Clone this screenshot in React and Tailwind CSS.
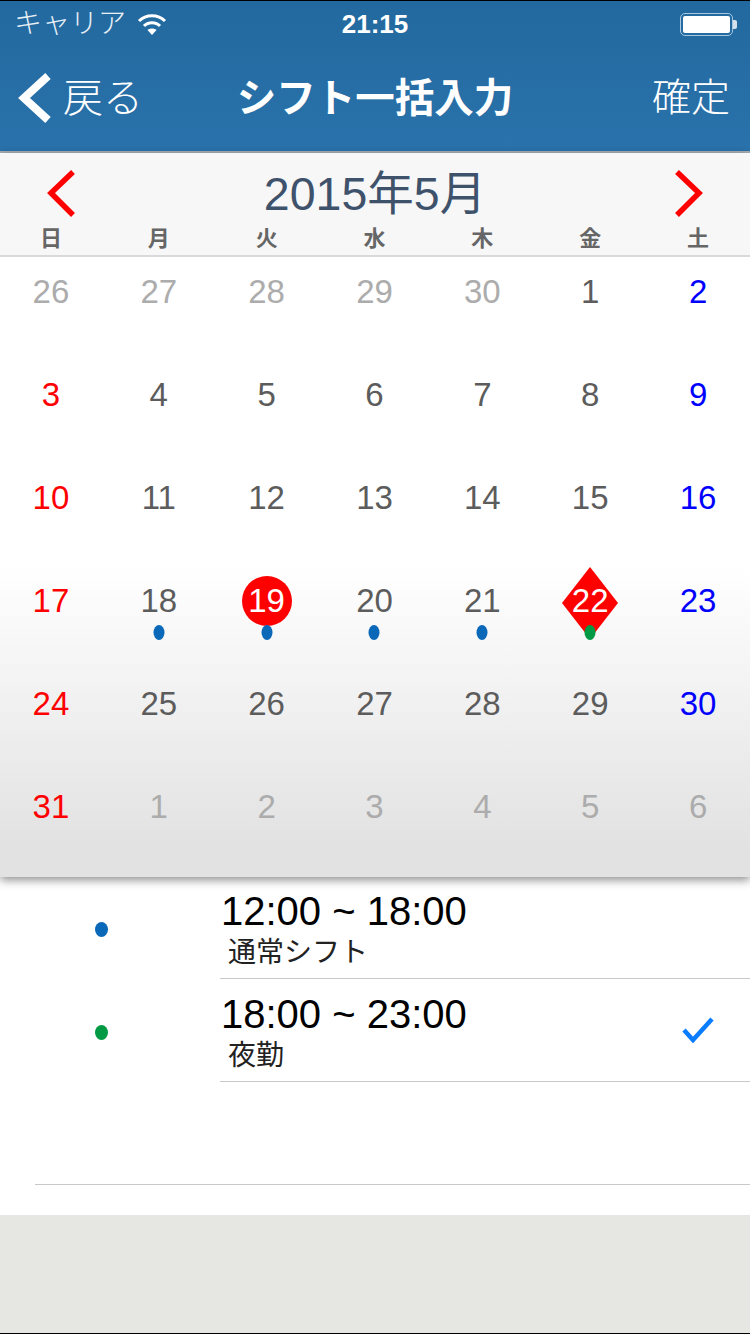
import React from 'react';

const sans = "font-['Liberation_Sans','Noto_Sans_CJK_JP',sans-serif]";

const weekdays = ['日', '月', '火', '水', '木', '金', '土'];

const weeks = [
  [26, 27, 28, 29, 30, 1, 2],
  [3, 4, 5, 6, 7, 8, 9],
  [10, 11, 12, 13, 14, 15, 16],
  [17, 18, 19, 20, 21, 22, 23],
  [24, 25, 26, 27, 28, 29, 30],
  [31, 1, 2, 3, 4, 5, 6],
];

const dayColor = (w, d) => {
  const outside = (w === 0 && d < 5) || (w === 5 && d > 0);
  if (outside) return 'text-[#acacac]';
  if (d === 0) return 'text-[#ff0000]';
  if (d === 6) return 'text-[#0000ff]';
  return 'text-[#5c5c5c]';
};

const Dot = ({ color = 'bg-[#0a68b8]' }) => (
  <span className={`block w-[11px] h-[15px] rounded-[50%] ${color}`} />
);

const Chevron = ({ points, width, color, w, h }) => (
  <svg width={w} height={h} viewBox={`0 0 ${w} ${h}`} fill="none">
    <polyline points={points} stroke={color} strokeWidth={width} />
  </svg>
);

const DayCell = ({ w, d, day }) => {
  const isCircle = w === 3 && d === 2;
  const isDiamond = w === 3 && d === 5;
  const hasDot = w === 3 && d >= 1 && d <= 5;

  return (
    <div className="relative h-[103px] flex flex-col items-center">
      {isCircle && (
        <span className="absolute left-1/2 top-[10px] -translate-x-1/2 w-[50px] h-[50px] rounded-full bg-[#ff0000]" />
      )}
      {isDiamond && (
        <svg className="absolute left-1/2 top-[1px] -translate-x-1/2" width="56" height="72" viewBox="0 0 56 72">
          <polygon points="28,0 56,36 28,72 0,36" fill="#ff0000" />
        </svg>
      )}
      <span
        className={`relative mt-[16px] text-[33px] leading-[38px] ${
          isCircle || isDiamond ? 'text-white' : dayColor(w, d)
        }`}
      >
        {day}
      </span>
      {hasDot && (
        <span className="absolute left-1/2 top-[59px] -translate-x-1/2">
          <Dot color={isDiamond ? 'bg-[#009a44]' : 'bg-[#0a68b8]'} />
        </span>
      )}
    </div>
  );
};

const ShiftRow = ({ time, label, dot, checked, height, dotTop }) => (
  <div className={`flex ${height}`}>
    <div className={`w-[220px] shrink-0 pl-[95px] ${dotTop}`}>
      <span className={`block w-[13px] h-[15px] rounded-[50%] ${dot}`} />
    </div>
    <div className="flex-1 flex items-center justify-between border-b border-[#c8c8c8] pr-[36px]">
      <div className="pt-[3px]">
        <div className="pl-[1px] text-[40px] leading-[46px] text-black">{time}</div>
        <div className="pl-[8px] mt-[2px] text-[28px] leading-[34px] text-[#222222]">{label}</div>
      </div>
      {checked && (
        <svg width="32" height="26" viewBox="0 0 32 26" fill="none">
          <polyline points="2,13 11,23 30,2" stroke="#0a7cff" strokeWidth="4.5" />
        </svg>
      )}
    </div>
  </div>
);

export default function App() {
  return (
    <div className={`w-[750px] h-[1334px] overflow-hidden bg-white flex flex-col ${sans}`}>
      <header className="h-[153px] shrink-0 border-t border-black border-b-2 border-b-[#a9b0b5] bg-gradient-to-b from-[#22699f] to-[#2a72ab] text-white">
        <div className="h-[46px] pl-[14px] pr-[13px] flex items-center justify-between relative">
          <div className="flex items-center gap-[11px]">
            <span className="text-[28px] leading-[34px] font-light text-[#e8eff5]">キャリア</span>
            <svg width="30" height="24" viewBox="0 0 30 24" fill="none" stroke="#ffffff" strokeWidth="3">
              <path d="M2 9 C9 2 21 2 28 9" />
              <path d="M7 14 C11 9.500 19 9.500 23 14" />
              <path d="M15 23 L10.500 18 C13 16 17 16 19.500 18 Z" fill="#ffffff" stroke="none" />
            </svg>
          </div>
          <span className="absolute left-1/2 -translate-x-1/2 text-[26px] leading-[32px] font-bold">21:15</span>
          <div className="flex items-center">
            <div className="w-[53px] h-[23px] rounded-[5px] border border-[#a9c6de] p-[2px]">
              <div className="w-full h-full rounded-[2px] bg-white" />
            </div>
            <span className="w-[4px] h-[9px] rounded-r-[2px] bg-[#d5e2ee]" />
          </div>
        </div>
        <div className="h-[103px] flex items-center justify-between relative pb-[2px] pl-[18px] pr-[20px]">
          <div className="flex items-center gap-[11px]">
            <Chevron w={34} h={50} points="30,3 6,25 30,47" width={8} color="#ffffff" />
            <span className="text-[40px] leading-[46px] font-light">戻る</span>
          </div>
          <span className="absolute left-1/2 -translate-x-1/2 text-[39.500px] leading-[46px] font-bold">
            シフト一括入力
          </span>
          <span className="text-[39px] leading-[46px] font-light">確定</span>
        </div>
      </header>

      <section className="relative z-10 shrink-0 shadow-[0_3px_9px_rgba(0,0,0,0.45)]">
        <div className="h-[104px] bg-[#f7f7f7] border-b-2 border-[#d9d9d9]">
          <div className="h-[73px] flex items-center justify-between px-[44px] pt-[9px]">
            <Chevron w={32} h={48} points="29,2 7,23 29,45" width={5.5} color="#ff0000" />
            <span className="text-[46.500px] leading-[52px] text-[#3f526b]">2015年5月</span>
            <Chevron w={32} h={48} points="3,2 25,23 3,45" width={5.5} color="#ff0000" />
          </div>
          <div className="w-[755px] -ml-[3px] grid grid-cols-7">
            {weekdays.map((name) => (
              <span key={name} className="text-center text-[22px] leading-[26px] font-bold text-[#666666]">
                {name}
              </span>
            ))}
          </div>
        </div>
        <div className="h-[620px] bg-gradient-to-b from-white from-[50%] to-[#e2e2e2] to-[95%]">
          <div className="w-[755px] -ml-[3px] grid grid-cols-7">
            {weeks.map((week, w) =>
              week.map((day, d) => <DayCell key={`${w}-${d}`} w={w} d={d} day={day} />)
            )}
          </div>
        </div>
      </section>

      <section className="h-[338px] shrink-0 bg-white flex flex-col">
        <ShiftRow time="12:00 ~ 18:00" label="通常シフト" dot="bg-[#0a68b8]" height="h-[102px]" dotTop="pt-[45px]" />
        <ShiftRow time="18:00 ~ 23:00" label="夜勤" dot="bg-[#009a44]" height="h-[103px]" dotTop="pt-[46px]" checked />
        <div className="ml-[35px] h-[103px] border-b border-[#c8c8c8]" />
      </section>

      <footer className="flex-1 bg-[#e6e7e2] border-b border-black" />
    </div>
  );
}
